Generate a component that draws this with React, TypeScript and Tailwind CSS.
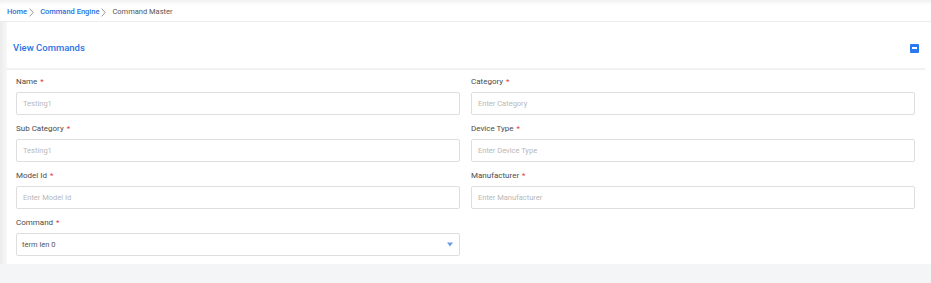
import React from 'react'

type Field = {
  label: string
  placeholder: string
}

const rows: Field[][] = [
  [
    { label: 'Name', placeholder: 'Testing1' },
    { label: 'Category', placeholder: 'Enter Category' },
  ],
  [
    { label: 'Sub Category', placeholder: 'Testing1' },
    { label: 'Device Type', placeholder: 'Enter Device Type' },
  ],
  [
    { label: 'Model Id', placeholder: 'Enter Model Id' },
    { label: 'Manufacturer', placeholder: 'Enter Manufacturer' },
  ],
]

function Label({ text }: { text: string }) {
  return (
    <div className="h-[10px] mb-[5px] flex items-center text-[8px] leading-[10px] text-[#4a4a4a]">
      {text}
      <span className="ml-[3px] text-[#e53935]">*</span>
    </div>
  )
}

function TextField({ field }: { field: Field }) {
  return (
    <div className="flex-1">
      <Label text={field.label} />
      <div className="h-[23px] border border-[#dedede] rounded-[2px] bg-white flex items-center px-[6px] text-[7.5px] text-[#b8b8b8]">
        {field.placeholder}
      </div>
    </div>
  )
}

function Chevron() {
  return (
    <svg width="5" height="9" viewBox="0 0 5 9" className="mx-[2px]">
      <path d="M0.6 0.6 L4.2 4.5 L0.6 8.4" fill="none" stroke="#8a8a8a" strokeWidth="0.9" />
    </svg>
  )
}

export default function App() {
  return (
    <div className="w-[931px] h-[283px] overflow-hidden bg-[#f4f5f7]" style={{ fontFamily: 'Roboto, "Liberation Sans", sans-serif' }}>
      {/* Breadcrumb */}
      <div className="h-[22px] bg-white border-b border-[#ededed] shadow-[inset_0_5px_5px_-3px_rgba(0,0,0,0.07)] flex items-center pl-[7px] pt-[3px] text-[7.5px] font-medium">
        <span className="text-[#2a6fdb]">Home</span>
        <Chevron />
        <span className="ml-[4px] text-[#2a6fdb]">Command Engine</span>
        <Chevron />
        <span className="ml-[4px] text-[#555] font-normal">Command Master</span>
      </div>

      <div className="flex">
        <div className="w-[7px] bg-gradient-to-r from-[#ececec] to-[#f7f7f7]" />
        {/* Card */}
        <div className="flex-1 bg-white">
          <div className="h-[46px] flex items-center justify-between pt-[6px] pl-[6px] pr-[12px]">
            <span className="text-[9.5px] font-medium text-[#2a74e6]">View Commands</span>
            <div className="w-[9px] h-[9px] bg-[#2979f2] rounded-[1px] flex items-center justify-center">
              <div className="w-[5px] h-[1.5px] bg-white" />
            </div>
          </div>
          <div className="h-[2px] bg-[#f1f1f1] mr-[6px]" />

          <div className="pl-[9px] pr-[16px] pt-[7px] pb-[8px] flex flex-col gap-[9px]">
            {rows.map((row, i) => (
              <div key={i} className="flex gap-[11px]">
                {row.map((f) => (
                  <TextField key={f.label} field={f} />
                ))}
              </div>
            ))}
            <div className="flex gap-[11px]">
              <div className="flex-1">
                <Label text="Command" />
                <div className="h-[23px] border border-[#dedede] rounded-[2px] bg-white flex items-center justify-between pl-[5px] pr-[6px] text-[7.5px] text-[#555]">
                  <span>term len 0</span>
                  <svg width="6" height="5" viewBox="0 0 6 5">
                    <path d="M0 0.5 H6 L3 4.5 Z" fill="#6b9be8" />
                  </svg>
                </div>
              </div>
              <div className="flex-1" />
            </div>
          </div>
        </div>
      </div>
    </div>
  )
}
